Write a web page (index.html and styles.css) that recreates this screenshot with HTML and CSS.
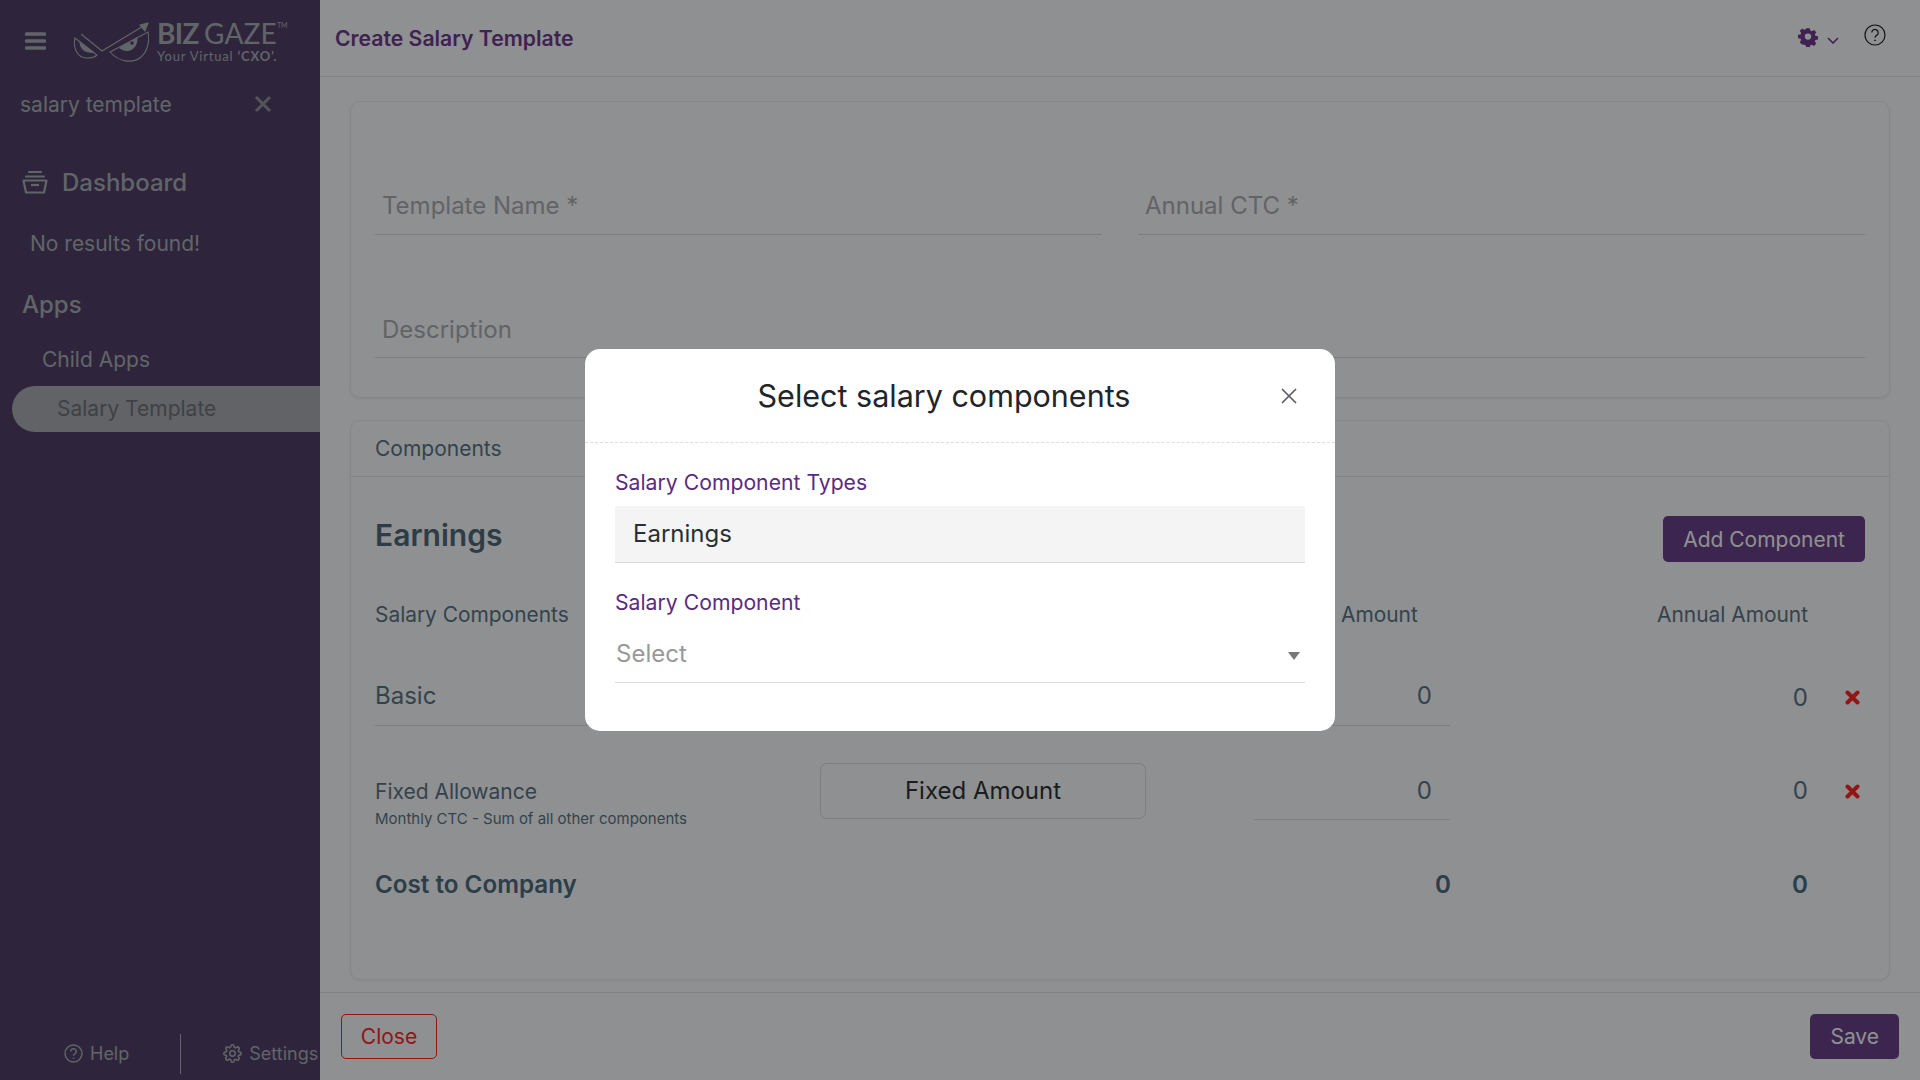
FILE: index.html
```html
<!DOCTYPE html>
<html lang="en">
<head>
<meta charset="utf-8">
<title>Create Salary Template</title>
<link rel="stylesheet" href="styles.css">
</head>
<body>
<div class="app">
  <aside class="sidebar">
    <div class="brand">
      <svg class="burger" width="21" height="18" viewBox="0 0 21 18"><path d="M1.500 2h18M1.500 9h18M1.500 16h18" stroke="currentColor" stroke-width="3.600" stroke-linecap="round"/></svg>
      <div class="logo">
        <svg class="logo-mark" width="76" height="42" viewBox="0 0 76 42" fill="none" stroke="currentColor" stroke-width="1.100">
          <path d="M8 14 L29 31 L72 5"/>
          <path d="M75 3 L67 5 L72 11 Z" fill="currentColor"/>
          <path d="M2 18 C0 26 3 38 14 38 C18 38 22 37 24 35 Z"/>
          <path d="M7 23 L20 32 C14 33 8 30 7 23 Z" fill="currentColor"/>
          <path d="M37 32 L75 12 C77 22 74 32 68 37 C60 44 46 42 37 32 Z"/>
          <path d="M47 28 L64 18 C64 28 56 34 47 28 Z" fill="currentColor"/>
          <circle class="iris-dot" cx="59" cy="23" r="1.800"/>
        </svg>
        <div class="logo-text">
          <div class="logo-name"><b>BIZ</b><span>GAZE</span><sup>TM</sup></div>
          <div class="logo-tag">Your Virtual <b>‘CXO’.</b></div>
        </div>
      </div>
    </div>
    <div class="search">
      <span>salary template</span>
      <svg class="search-x" width="18" height="18" viewBox="0 0 18 18"><path d="M2 2l14 14M16 2L2 16" stroke="currentColor" stroke-width="3"/></svg>
    </div>
    <div class="dash">
      <svg width="26" height="24" viewBox="0 0 26 24" fill="none" stroke="currentColor" stroke-width="2.200"><path d="M7 2h12M4 6.500h18" stroke-linecap="round"/><path d="M1.500 10.500h23l-2.500 12H4z" stroke-linejoin="round"/><path d="M9 15h8"/></svg>
      <span>Dashboard</span>
    </div>
    <div class="empty">No results found!</div>
    <div class="apps">Apps</div>
    <div class="child">Child Apps</div>
    <div class="active">Salary Template</div>
    <div class="side-foot">
      <div class="help-link">
        <svg width="19" height="19" viewBox="0 0 19 19" fill="none" stroke="currentColor" stroke-width="1.400"><circle cx="9.500" cy="9.500" r="8.500"/><path d="M6.800 7.400a2.700 2.700 0 1 1 4 2.400c-.9.500-1.300 1-1.300 2"/><path d="M9.500 13.600v1.400"/></svg>
        <span>Help</span>
      </div>
      <div class="foot-div"></div>
      <div class="settings-link">
        <svg width="19" height="19" viewBox="0 0 24 24" fill="none" stroke="currentColor" stroke-width="2"><circle cx="12" cy="12" r="3.400"/><path d="M19.400 15a1.700 1.700 0 0 0 .3 1.800l.1.1a2 2 0 1 1-2.900 2.900l-.1-.1a1.700 1.700 0 0 0-2.800 1.200V21a2 2 0 1 1-4 0v-.1A1.700 1.700 0 0 0 7 19.700l-.1.1a2 2 0 1 1-2.900-2.900l.1-.1A1.700 1.700 0 0 0 2.900 14H3a2 2 0 1 1 0-4h.1A1.700 1.700 0 0 0 4.300 7l-.1-.1A2 2 0 1 1 7.100 4l.1.1A1.700 1.700 0 0 0 10 2.900V3a2 2 0 1 1 4 0v.1a1.700 1.700 0 0 0 2.900 1.200l.1-.1a2 2 0 1 1 2.900 2.900l-.1.1a1.700 1.700 0 0 0 1.200 2.800H21a2 2 0 1 1 0 4h-.1a1.700 1.700 0 0 0-1.500 1z"/></svg>
        <span>Settings</span>
      </div>
    </div>
  </aside>

  <main class="main">
    <header class="topbar">
      <h1 class="page-title">Create Salary Template</h1>
      <div class="top-icons">
        <svg class="gear" width="20" height="20" viewBox="0 0 20 20"><path fill-rule="evenodd" d="M8.200 1h3.600l.5 2.500 1.500.7 2.200-1.400 2.300 2.500-1.500 2.100.6 1.500 2.600.5v3.400l-2.600.5-.6 1.500 1.500 2.100-2.300 2.500-2.200-1.400-1.500.7-.5 2.300H8.200l-.5-2.300-1.500-.7L4 17.900l-2.300-2.500 1.500-2.100-.6-1.500L0 11.300V7.900l2.600-.5.6-1.500-1.500-2.100L4 1.300l2.200 1.400 1.500-.7zM10 6.500a3.200 3.200 0 1 0 0 6.400 3.200 3.200 0 0 0 0-6.400z" transform="translate(0 .2) scale(1 .97)"/></svg>
        <svg class="chev" width="12" height="7" viewBox="0 0 12 7" fill="none"><path d="M1 1l5 5 5-5" stroke="currentColor" stroke-width="1.600"/></svg>
        <svg class="qmark" width="22" height="22" viewBox="0 0 22 22" fill="none" stroke="currentColor" stroke-width="1.200"><circle cx="11" cy="11" r="10"/><path d="M7.800 8.600a3.200 3.200 0 1 1 4.800 2.800c-1.100.6-1.600 1.200-1.600 2.400"/><path d="M11 15.800v1.200" stroke-width="1.600"/></svg>
      </div>
    </header>

    <div class="content">
      <section class="card form-card">
        <div class="form-grid">
          <div class="field">Template Name *</div>
          <div class="field">Annual CTC *</div>
          <div class="field field-wide">Description</div>
        </div>
      </section>

      <section class="card comp-card">
        <div class="comp-head">Components</div>
        <div class="comp-body">
          <div class="earn-row">
            <h2 class="earn-title">Earnings</h2>
            <button class="btn btn-primary add-btn">Add Component</button>
          </div>
          <div class="grid grid-head">
            <div>Salary Components</div>
            <div></div>
            <div></div>
            <div class="head-amount">Amount</div>
            <div class="num">Annual Amount</div>
            <div></div>
          </div>
          <div class="grid grid-basic">
            <div class="name-cell name-basic">Basic</div>
            <div></div>
            <div></div>
            <div class="amount-cell">0</div>
            <div class="num annual">0</div>
            <div class="del"><svg width="15" height="15" viewBox="0 0 15 15"><path d="M2.500 2.500l10 10M12.500 2.500l-10 10" stroke="currentColor" stroke-width="4" stroke-linecap="round"/></svg></div>
          </div>
          <div class="grid grid-fixed">
            <div class="name-cell">
              <div class="name-main">Fixed Allowance</div>
              <div class="name-sub">Monthly CTC - Sum of all other components</div>
            </div>
            <div class="type-btn">Fixed Amount</div>
            <div></div>
            <div class="amount-cell">0</div>
            <div class="num annual">0</div>
            <div class="del"><svg width="15" height="15" viewBox="0 0 15 15"><path d="M2.500 2.500l10 10M12.500 2.500l-10 10" stroke="currentColor" stroke-width="4" stroke-linecap="round"/></svg></div>
          </div>
          <div class="grid grid-total">
            <div>Cost to Company</div>
            <div></div>
            <div></div>
            <div class="num">0</div>
            <div class="num">0</div>
            <div></div>
          </div>
        </div>
      </section>
    </div>

    <footer class="footer">
      <button class="btn btn-close">Close</button>
      <button class="btn btn-primary">Save</button>
    </footer>
  </main>
</div>

<div class="overlay">
  <div class="modal">
    <div class="modal-head">
      <div class="modal-title">Select salary components</div>
      <svg class="modal-x" width="18" height="18" viewBox="0 0 18 18"><path d="M2 2l14 14M16 2L2 16" stroke="currentColor" stroke-width="1.700"/></svg>
    </div>
    <div class="modal-body">
      <label class="m-label">Salary Component Types</label>
      <div class="m-input">Earnings</div>
      <label class="m-label m-label-2">Salary Component</label>
      <div class="m-select">
        <span>Select</span>
        <i class="caret"></i>
      </div>
    </div>
  </div>
</div>
</body>
</html>
```

FILE: styles.css
```css
* { box-sizing: border-box; }
html, body { margin: 0; height: 100%; }
body { font-family: Inter, "Noto Sans", sans-serif; overflow: hidden; background: #eef0f2; color: #567080; }

.app { display: flex; height: 1080px; }

/* sidebar */
.sidebar { width: 320px; flex: none; background: #4e3e66; color: #a4a8ae; display: flex; flex-direction: column; overflow: hidden; position: relative; }
.brand { display: flex; align-items: center; height: 76px; padding: 6px 0 0 25px; }
.burger { flex: none; }
.logo { display: flex; align-items: center; margin-left: 27px; gap: 8px; }
.logo-mark { display: block; }
.iris-dot { fill: #4e3e66; stroke: none; }
.logo-name { font-family: Lato, sans-serif; font-size: 28px; line-height: 28px; display: flex; }
.logo-name b { font-weight: 700; margin-right: 5px; letter-spacing: -.6px; }
.logo-name span { font-weight: 400; letter-spacing: .2px; }
.logo-name sup { font-size: 7px; line-height: 10px; margin-top: 1px; }
.logo-tag { font-family: Lato, sans-serif; font-size: 13px; line-height: 14px; letter-spacing: .8px; white-space: nowrap; margin-top: 2px; }
.search { display: flex; align-items: center; justify-content: space-between; height: 40px; margin-top: 8px; padding: 0 48px 0 20px; font-size: 21px; }
.search-x { color: #8b8f95; }
.dash { display: flex; align-items: center; gap: 14px; margin-top: 38px; padding-left: 22px; height: 40px; font-size: 24px; font-weight: 500; }
.empty { margin-top: 26px; padding-left: 30px; font-size: 21px; line-height: 32px; }
.apps { margin-top: 29px; padding-left: 22px; font-size: 24px; font-weight: 500; line-height: 32px; }
.child { margin-top: 25px; padding-left: 42px; font-size: 21px; line-height: 28px; }
.active { margin: 12px 0 0 12px; height: 46px; line-height: 46px; padding-left: 45px; font-size: 21px; background: #a2a6ab; color: #6a6d74; border-radius: 23px 0 0 23px; }
.side-foot { margin-top: auto; height: 47px; margin-bottom: 3px; display: flex; align-items: center; padding-left: 64px; font-size: 18px; white-space: nowrap; }
.help-link, .settings-link { display: flex; align-items: center; gap: 7px; }
.foot-div { width: 1px; height: 40px; background: #a4a8ae; margin: 0 42px 0 51px; }

/* main */
.main { flex: 1; min-width: 0; display: flex; flex-direction: column; }
.topbar { height: 77px; flex: none; display: flex; align-items: center; justify-content: space-between; padding: 0 34px 0 15px; border-bottom: 1px solid #d8dade; }
.page-title { margin: 0; font-size: 21.200px; font-weight: 600; color: #693a88; }
.top-icons { display: flex; align-items: center; position: relative; top: -3px; }
.gear { color: #693a88; fill: currentColor; margin: 4px 9px 0 1px; }
.chev { color: #693a88; margin: 10px 25px 0 0; }
.qmark { color: #1f2227; }

.content { flex: 1; padding: 24px 30px 12px; display: flex; flex-direction: column; gap: 22px; min-height: 0; }
.card { border: 1px solid #dfe1e4; border-radius: 10px; box-shadow: 0 1px 3px rgba(0,0,0,.06); background: #eff0f2; }
.form-card { height: 297px; padding: 83px 24px 0; }
.form-grid { display: grid; grid-template-columns: 727px 727px; column-gap: 36px; row-gap: 73px; }
.field { height: 50px; border-bottom: 1px solid #cfd2d6; padding: 0 7px; font-size: 24px; line-height: 42px; color: #a3a6ab; }
.field-wide { grid-column: 1 / 3; line-height: 44px; }
.comp-card { flex: 1; }
.comp-head { height: 56px; padding-left: 24px; font-size: 21px; line-height: 56px; border-bottom: 1px solid #d8dade; }
.comp-body { padding: 39px 24px 0; }
.earn-row { display: flex; align-items: center; justify-content: space-between; height: 46px; }
.earn-title { margin: 0; font-size: 30px; font-weight: 600; color: #4b6675; position: relative; top: -4px; }
.btn { font-family: inherit; border-radius: 5px; border: 1px solid transparent; cursor: pointer; font-size: 21px; height: 45px; padding: 0 19px; }
.btn-primary { background: #644085; color: #eff0f2; }
.add-btn { height: 46px; }
.grid { display: grid; grid-template-columns: 445px 326px 108px 196px 1fr 58px; align-items: center; }
.grid-head { margin-top: 34px; height: 36px; font-size: 20.900px; }
.head-amount { padding-left: 87px; white-space: nowrap; }
.num { text-align: right; }
.grid-head .num { transform: translateX(1px); }
.grid-basic { margin-top: 37px; height: 57px; font-size: 24px; }
.name-basic { height: 57px; line-height: 54px; border-bottom: 1px solid #cfd2d6; }
.amount-cell { height: 57px; line-height: 54px; text-align: right; padding-right: 18px; border-bottom: 1px solid #cfd2d6; font-size: 24px; }
.annual { font-size: 24px; line-height: 50px; transform: translateX(1px); }
.del { color: #f52525; padding-left: 38px; display: flex; align-items: center; }
.del svg { display: block; }
.grid-fixed { margin-top: 37px; height: 57px; align-items: start; }
.name-main { font-size: 21px; line-height: 26px; margin-top: 16px; white-space: nowrap; }
.name-sub { font-size: 15px; line-height: 22px; margin-top: 3px; white-space: nowrap; }
.type-btn { height: 56px; border: 1px solid #cfd2d6; border-radius: 7px; text-align: center; font-size: 24px; line-height: 53px; color: #2c3036; }
.grid-fixed .amount-cell { height: 57px; line-height: 55px; }
.grid-fixed .annual, .grid-fixed .del { height: 56px; line-height: 55px; }
.grid-total { margin-top: 44px; height: 40px; font-size: 24.200px; font-weight: 600; color: #4a6878; }
.grid-total .num { transform: translateX(1px); }

.footer { height: 88px; flex: none; border-top: 1px solid #d8dade; display: flex; align-items: center; justify-content: space-between; padding: 0 21px; }
.btn-close { background: transparent; border-color: #f52525; color: #f52525; width: 96px; padding: 0; }

/* modal */
.overlay { position: fixed; inset: 0; background: rgba(0,0,0,.4); display: flex; align-items: center; justify-content: center; }
.modal { width: 750px; height: 382px; background: #fff; border-radius: 15px; }
.modal-head { height: 94px; display: flex; align-items: center; border-bottom: 1px dashed #dcdde0; padding: 0 37px 0 0; color: #212529; }
.modal-title { flex: 1; text-align: center; font-size: 30.500px; font-weight: 400; padding-left: 23px; line-height: 40px; }
.modal-x { color: #5b5e63; flex: none; }
.modal-body { padding: 27px 30px 0; }
.m-label { display: block; font-size: 21.200px; line-height: 24px; color: #5b2b80; }
.m-label-2 { margin-top: 27px; }
.m-input { margin-top: 12px; height: 57px; background: #f4f4f4; border-bottom: 1px solid #d8d8e0; padding-left: 18px; font-size: 24px; line-height: 55px; color: #2b2e33; }
.m-select { margin-top: 6px; height: 63px; border-bottom: 1px solid #d8d8e0; display: flex; align-items: center; justify-content: space-between; padding: 5px 5px 0 1px; font-size: 24px; color: #999; }
.caret { width: 0; height: 0; border-left: 6px solid transparent; border-right: 6px solid transparent; border-top: 8px solid #777; margin-top: 4px; }
```
